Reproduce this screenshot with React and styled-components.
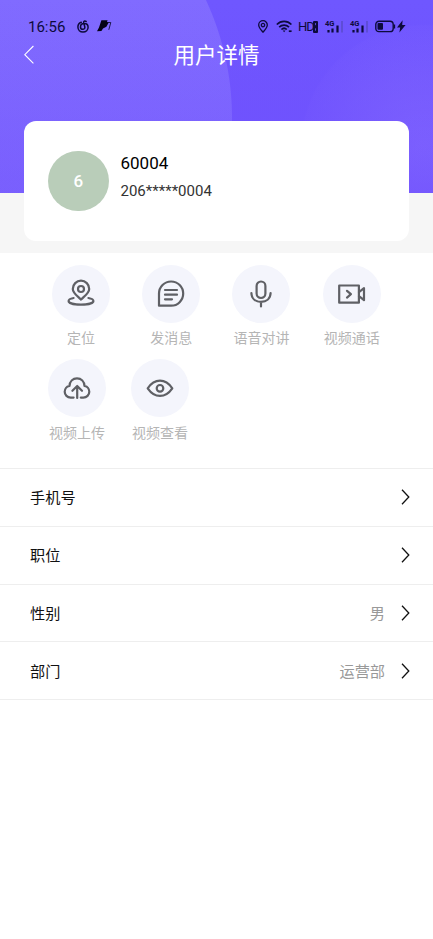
import styled, { createGlobalStyle } from 'styled-components';

const actionRows = [
    [
        { icon: 'locate', label: '定位' },
        { icon: 'message', label: '发消息' },
        { icon: 'mic', label: '语音对讲' },
        { icon: 'video', label: '视频通话' },
    ],
    [
        { icon: 'upload', label: '视频上传' },
        { icon: 'eye', label: '视频查看' },
    ],
];

const details = [
    { label: '手机号', value: '' },
    { label: '职位', value: '' },
    { label: '性别', value: '男' },
    { label: '部门', value: '运营部' },
];

// all drawn in a 30x30 box
const icons = {
    locate: (
        <>
            <path d='M15 20.6 C11.5 17 6.8 13.9 6.8 9.9 A8.2 8.2 0 0 1 23.2 9.9 C23.2 13.9 18.5 17 15 20.6 Z' />
            <circle cx='15' cy='10' r='3' />
            <path d='M7.6 19 C4.4 19.6 2.6 20.5 2.6 21.9 C2.6 24.3 8.5 25.6 15 25.6 C21.5 25.6 27.4 24.3 27.4 21.9 C27.4 20.5 25.6 19.6 22.4 19' />
        </>
    ),
    message: (
        <>
            <path d='M3 26.7 V14.6 A12.1 12.1 0 1 1 15.1 26.7 Z' />
            <path d='M9 11 H21 M9 15.7 H21 M9 20.3 H16' />
        </>
    ),
    mic: (
        <>
            <rect x='10.6' y='2.5' width='8.8' height='16.5' rx='4.4' />
            <path d='M5.4 14 C5.6 19.6 9.4 22.9 15 22.9 C20.6 22.9 24.4 19.6 24.6 14 M15 23 V27.5' />
        </>
    ),
    video: (
        <>
            <path d='M2.2 6.5 H21.9 V23.7 H2.2 Z' />
            <path d='M10 11.8 L13.9 15.2 L10 18.6' />
            <path d='M22 13.2 L27 9.2 V21.2 L22 17.2' />
        </>
    ),
    upload: (
        <>
            <path d='M11.6 24.6 H8.7 C5.3 24.6 2.7 22 2.7 18.8 C2.7 15.7 4.8 13.3 7.5 12.9 C7.7 8.4 10.8 5.3 15 5.3 C19.2 5.3 22.3 8.4 22.5 12.9 C25.2 13.3 27.3 15.7 27.3 18.8 C27.3 22 24.7 24.6 21.3 24.6 H18.8' />
            <path d='M15.2 25 V13.5 M10.4 17.8 L15.2 13 L20 17.8' />
        </>
    ),
    eye: (
        <>
            <path d='M2.7 15.3 C6 10.5 10.2 7.7 15 7.7 C19.8 7.7 24 10.5 27.3 15.3 C24 20.1 19.8 22.9 15 22.9 C10.2 22.9 6 20.1 2.7 15.3 Z' />
            <circle cx='15' cy='15.3' r='3.3' />
        </>
    ),
};

const Signal = () => (
    <SignalBox>
        <Network>4G</Network>
        <svg width='18' height='12' viewBox='0 0 18 12'>
            <path d='M3.5 9 V11.5 M7.5 7.5 V11.5 M12.5 4.5 V11.5' stroke='#0d0a3c' strokeWidth='2.2' />
            <path d='M17 0 V11.5' stroke='#5b4bce' strokeWidth='1.6' />
        </svg>
    </SignalBox>
);

const StatusBar = () => (
    <Status>
        <Time>16:56</Time>
        <svg width='12' height='13' viewBox='0 0 12 13' fill='none' stroke='#0d0a3c' strokeWidth='1.5' strokeLinecap='round'>
            <path d='M4.3 2.2 C1.9 3 .9 5 .9 7 C.9 10 3.1 12 6 12 C9 12 11.1 10 11.1 7.3 C11.1 5 9.5 3.6 7.2 3.6 C4.7 3.6 3.5 5.2 3.5 6.9 C3.5 8.4 4.5 9.3 5.8 9.3 C7.2 9.3 8 8.3 7.8 7 L6.7 2.7 C6.4 1.3 7.7 .6 9.1 1.5' />
        </svg>
        <Bird width='15' height='12' viewBox='0 0 15 12'>
            <path d='M4.4 .3 H10.6 L10 2 H12 L9.4 6.8 L6 8.4 L4.4 11 L0 11.2 L2 7.4 Z' fill='#050315' />
            <path d='M10.5 2.5 H13.8 L11.8 9.8' fill='none' stroke='#151040' strokeWidth='.9' />
        </Bird>
        <Spacer />
        <svg width='10' height='13' viewBox='0 0 10 13' fill='none' stroke='#0d0a3c' strokeWidth='1.3'>
            <path d='M5 12.2 C3.2 10 .7 7.7 .7 5 A4.3 4.3 0 0 1 9.3 5 C9.3 7.7 6.8 10 5 12.2 Z' />
            <circle cx='5' cy='5.1' r='1.7' />
        </svg>
        <Wifi width='17' height='13' viewBox='0 0 17 13' fill='none' stroke='#0d0a3c' strokeWidth='1.7'>
            <path d='M.8 4.5 C5 .2 11.2 .2 15.4 4.5 M3.2 7.2 C6 4.4 10.2 4.4 13 7.2 M5.4 9.5 C7 8 9.2 8 10.8 9.5' />
            <path d='M6.7 10.6 L8.1 12.2 L9.5 10.6 Z' fill='#0d0a3c' stroke='none' />
            <path d='M12.8 11.2 H15.6' />
        </Wifi>
        <Hd>HD</Hd>
        <svg width='5' height='12' viewBox='0 0 5 12'>
            <rect width='5' height='12' rx='1' fill='#0d0a3c' />
            <path d='M2.5 2 V4.2 M2.5 7.3 V9.7' stroke='#6d56f2' strokeWidth='.8' />
        </svg>
        <Signal />
        <Signal />
        <Battery width='31' height='13' viewBox='0 0 31 13'>
            <rect x='.8' y='1.2' width='17.4' height='10.4' rx='3.2' fill='none' stroke='#0d0a3c' strokeWidth='1.4' />
            <rect x='2.5' y='3' width='5.5' height='6.8' rx='1' fill='#0d0a3c' />
            <path d='M19.5 4.5 V8.5' stroke='#0d0a3c' strokeWidth='1.3' />
            <path d='M27.6 .3 L22 7.5 H25.2 L24.4 12.6 L30.6 5 H27.2 Z' fill='#0d0a3c' />
        </Battery>
    </Status>
);

const App = () => {

    return (
        <Page>
            <GlobalStyle />
            <Hero>
                <StatusBar />
                <TitleBar>
                    <svg width='11' height='20' viewBox='0 0 11 20'>
                        <path d='M9.4 1 L.8 9.7 L9.4 18.4' fill='none' stroke='#fff' strokeWidth='1.1' />
                    </svg>
                    <Title>用户详情</Title>
                </TitleBar>
            </Hero>

            {/* pulled up so it overlaps the purple header */}
            <CardStrip>
                <Card>
                    <Avatar>6</Avatar>
                    <div>
                        <Name>60004</Name>
                        <Phone>206*****0004</Phone>
                    </div>
                </Card>
            </CardStrip>

            <Actions>
                {actionRows.map((row, i) => (
                    <ActionRow key={i} $short={row.length < 4}>
                        {row.map((item) => (
                            <Action key={item.icon}>
                                <IconCircle>
                                    <Icon viewBox='0 0 30 30'>{icons[item.icon]}</Icon>
                                </IconCircle>
                                <ActionLabel>{item.label}</ActionLabel>
                            </Action>
                        ))}
                    </ActionRow>
                ))}
            </Actions>

            <List>
                {details.map((item) => (
                    <Row key={item.label}>
                        <RowLabel>{item.label}</RowLabel>
                        <RowValue>{item.value}</RowValue>
                        <svg width='9' height='16' viewBox='0 0 9 16'>
                            <path d='M1 .8 L7.8 8 L1 15.2' fill='none' stroke='#111' strokeWidth='1.3' />
                        </svg>
                    </Row>
                ))}
            </List>
        </Page>
    )
}

const GlobalStyle = createGlobalStyle`
* {
    box-sizing: border-box;
}
body {
    margin: 0;
    background: #fff;
    font-family: Roboto, 'Noto Sans CJK SC', sans-serif;
}
svg {
    display: block;
    flex-shrink: 0;
}
`

const Page = styled.div`
width: 100%;
min-height: 939px;
background: #fff;
`

const Hero = styled.div`
height: 192.5px;
padding-top: 17.5px;
background:
    linear-gradient(rgba(112, 82, 253, 0), rgba(112, 82, 253, 0.45)),
    radial-gradient(circle at -48px 118px, rgba(133, 112, 255, 0.8) 279.5px, transparent 280.5px),
    radial-gradient(circle at 424px 148px, rgba(138, 112, 255, 0.65) 0, rgba(130, 104, 255, 0.12) 122px, transparent 124px),
    linear-gradient(#6f57ff, #6f50fd);
`

const Status = styled.div`
height: 18px;
padding: 0 27px 0 28px;
display: flex;
align-items: center;
color: #0d0a3c;
`

const Time = styled.span`
width: 49px;
font-size: 15px;
line-height: 18px;
`

const Bird = styled.svg`
margin: -1px 0 0 8px;
`

const Spacer = styled.div`
flex: 1;
`

const Wifi = styled.svg`
margin-left: 8px;
`

const Hd = styled.span`
width: 15px;
margin-left: 5px;
font-size: 13px;
line-height: 18px;
letter-spacing: -1px;
`

const SignalBox = styled.div`
width: 18px;
height: 12px;
margin-left: 7px;
position: relative;
`

const Network = styled.span`
position: absolute;
left: 0;
top: -1px;
font-size: 7.5px;
line-height: 7px;
font-weight: 700;
`

const Battery = styled.svg`
margin-left: 7px;
`

const TitleBar = styled.div`
height: 38px;
padding: 0 24px;
display: grid;
grid-template-columns: 11px 1fr 11px;
align-items: center;
`

const Title = styled.h1`
margin: 0;
padding-top: 1px;
color: #fff;
font-size: 21.5px;
font-weight: 400;
line-height: 37px;
text-align: center;
`

const CardStrip = styled.div`
height: 60px;
padding: 0 24px;
background: #f6f6f6;
`

const Card = styled.div`
position: relative;
top: -72px;
height: 120.5px;
padding: 0 24px;
display: flex;
align-items: center;
gap: 12px;
background: #fff;
border-radius: 12px;
`

const Avatar = styled.div`
width: 60.5px;
height: 60.5px;
border-radius: 50%;
background: #b9cdb9;
color: #fff;
font-size: 17px;
font-weight: 500;
line-height: 61px;
text-align: center;
`

const Name = styled.div`
color: #000;
font-size: 17px;
line-height: 28px;
`

const Phone = styled.div`
margin-bottom: 8px;
color: #333;
font-size: 15px;
line-height: 28px;
`

const Actions = styled.div`
height: 215.5px;
padding-top: 12px;
`

const ActionRow = styled.div`
height: 94.7px;
display: grid;
grid-template-columns: ${(props) => props.$short ? 'repeat(2, 83px)' : 'repeat(4, 90.2px)'};
padding-left: ${(props) => props.$short ? '35.5px' : '36px'};
`

const Action = styled.div`
display: flex;
flex-direction: column;
align-items: center;
`

const IconCircle = styled.div`
width: 58px;
height: 58px;
display: flex;
align-items: center;
justify-content: center;
border-radius: 50%;
background: #f4f5fc;
`

const Icon = styled.svg`
width: 30px;
height: 30px;
fill: none;
stroke: #5f6065;
stroke-width: 2.2;
stroke-linecap: round;
stroke-linejoin: round;
`

const ActionLabel = styled.span`
margin-top: 5.8px;
color: #b5b5b5;
font-size: 14px;
line-height: 20px;
white-space: nowrap;
`

const List = styled.div`
border-top: 1px solid #eee;
`

const Row = styled.div`
height: 57.75px;
padding: 0 23px 0 30px;
display: flex;
align-items: center;
border-bottom: 1px solid #eee;
`

const RowLabel = styled.span`
flex: 1;
padding-bottom: 2px;
color: #111;
font-size: 15.2px;
`

const RowValue = styled.span`
margin-right: 16px;
padding-bottom: 2px;
color: #999;
font-size: 15.2px;
`

export default App;
